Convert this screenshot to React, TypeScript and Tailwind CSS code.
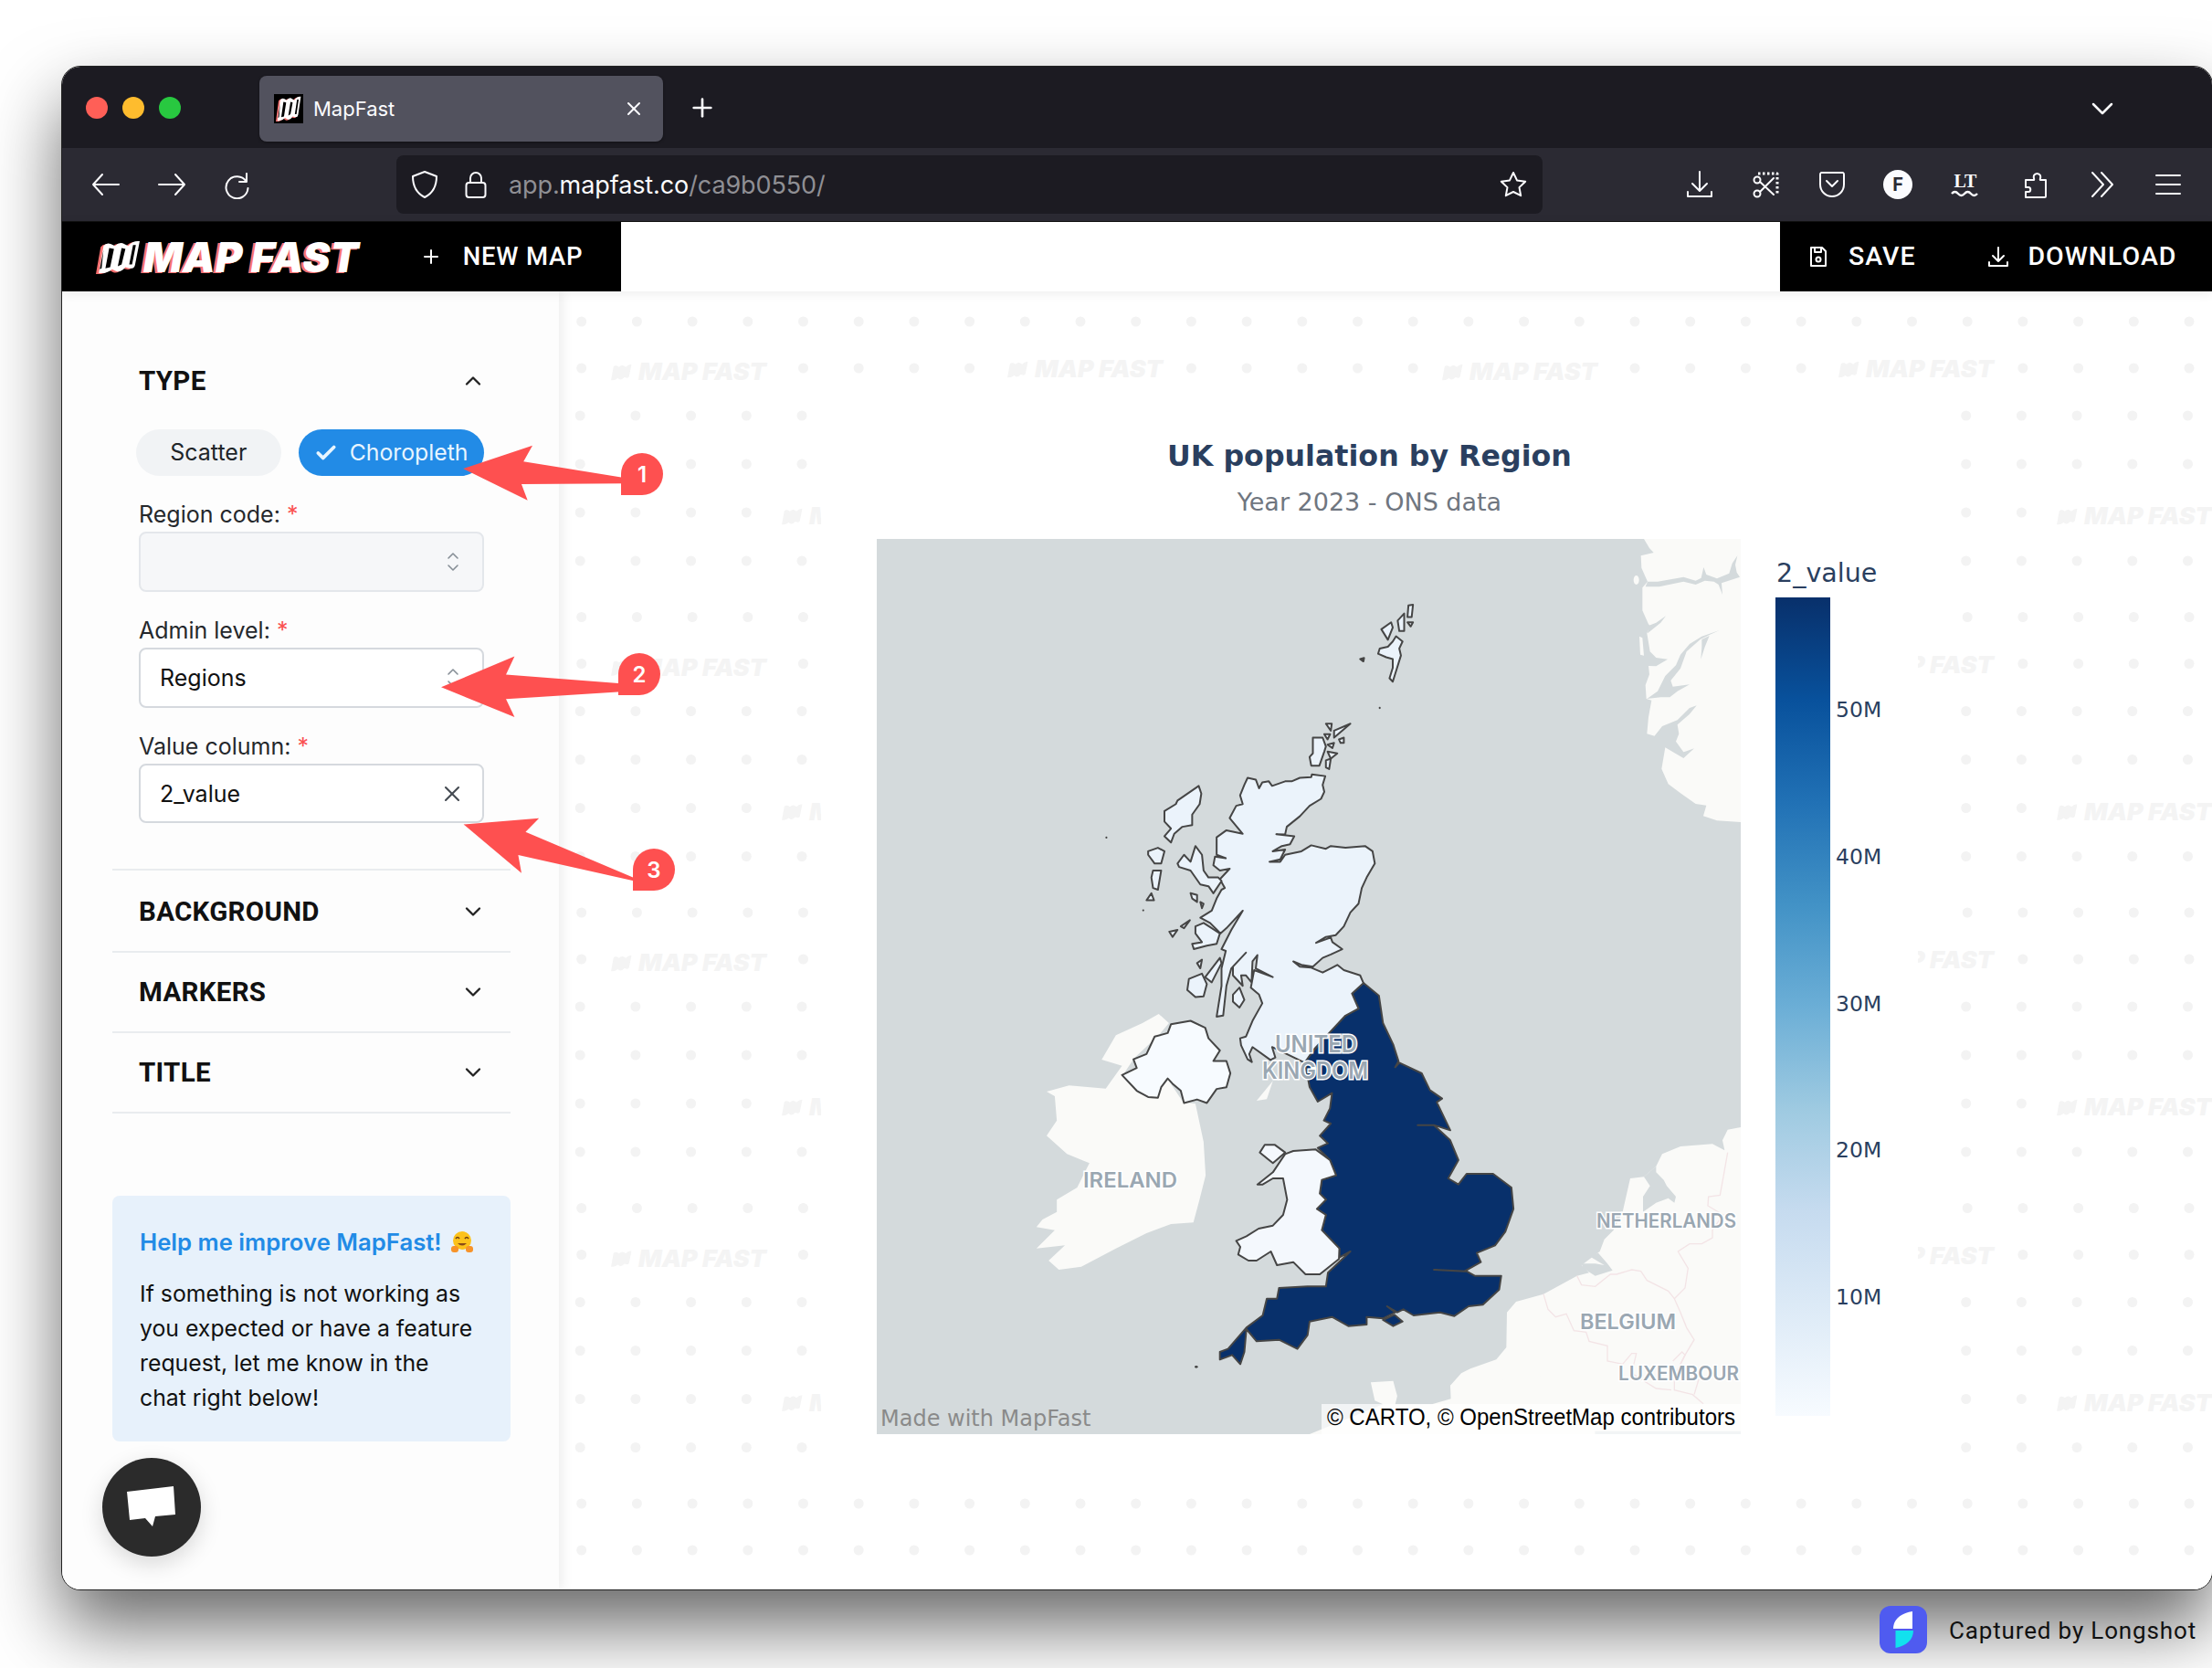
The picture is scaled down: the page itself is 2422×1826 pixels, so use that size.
import React from "react";
import { ChevronDown, ChevronUp, Check, X, Plus } from "lucide-react";

const LogoIcon = ({ fill = "#fff", shadow, className }: { fill?: string; shadow?: string; className?: string }) => {
  const outer = "M9 7 Q12 3 17 5 L21 7 Q26 2 31 5 L35 7 Q40 1 47 2 L42 27 Q41 31 36 30 L32 29 Q27 35 22 33 L18 31 Q12 36 4 35 Z";
  const slits = "M15 9 L20 10 L16 29 L11 30 Z M28 9 L32 10 L28 26 L24 28 Z M40 6 L43 6 L39 26 L36 26 Z M9 11 L7 30 L5 31 Z";
  return (
    <svg viewBox="1 1 47 35" className={className} preserveAspectRatio="none">
      {shadow && <path d={outer} fill={shadow} transform="translate(-3 1)" />}
      <path d={outer} fill={fill} />
      <path d={slits} fill={shadow ? "#000" : "#fff"} />
    </svg>
  );
};

const I = ({ className, children, vb = "0 0 32 32", sw = 2 }: { className?: string; children: React.ReactNode; vb?: string; sw?: number }) => (
  <svg viewBox={vb} className={className} fill="none" stroke="currentColor" strokeWidth={sw} strokeLinecap="round" strokeLinejoin="round">
    {children}
  </svg>
);

const BrowserIcons = {
  back: <I className="w-8 h-8"><path d="M30 16H2M12 5 2 16l10 11" /></I>,
  forward: <I className="w-8 h-8"><path d="M2 16h28M20 5l10 11-10 11" /></I>,
  reload: <I className="w-8 h-8"><path d="M26 4v9h-8M25.5 12.5A12 12 0 1 0 27.5 20" /></I>,
  shield: <I className="w-8 h-8"><path d="M16 2 29 7c0 10-3 18-13 23C6 25 3 17 3 7Z" /></I>,
  lock: <I className="w-8 h-8"><rect x="5.5" y="14" width="21" height="16" rx="3" /><path d="M10 14V9a6 6 0 0 1 12 0v5" /></I>,
  star: <I className="w-8 h-8"><path d="m16 3 4 8.4 9.2 1.3-6.7 6.4 1.7 9.1L16 24l-8.2 4.2 1.7-9.1-6.7-6.4 9.2-1.3Z" /></I>,
  download: <I className="w-8 h-8"><path d="M16 2v20M8 15l8 8 8-8M3 24v5h26v-5" /></I>,
  snip: (
    <I className="w-8 h-8">
      <path d="M7 4h21v22" strokeDasharray="2.5 2.5" strokeWidth="3" strokeLinecap="butt" />
      <circle cx="6" cy="11" r="3.5" />
      <circle cx="6" cy="26" r="3.5" />
      <path d="M9 13 24 27M9 24 24 9" />
    </I>
  ),
  pocket: <I className="w-8 h-8"><path d="M4 3h24a2 2 0 0 1 1 2v11a13 13 0 0 1-26 0V5a2 2 0 0 1 1-2Z" /><path d="m10 12 6 6 6-6" /></I>,
  puzzle: <I className="w-8 h-8"><path d="M5 30h21a1 1 0 0 0 1-1V11h-6c-1-1 1-2 0-5a4 4 0 0 0-7 0c-1 3 1 4 0 5H5v8h3c3 0 3 5 0 5H5Z" /></I>,
  chevrons: <I className="w-8 h-8"><path d="M4 3l12 13L4 29M14 3l12 13-12 13" /></I>,
  menu: <I className="w-8 h-8"><path d="M3 6h26M3 16h26M3 26h26" /></I>,
};

const DOT_ROWS = [0, 51, 103, 156, 209, 262];
const DOT_DX = [1.5, 1.5, 0, 0, 0, 0];
const WM: { x: number; y: number }[] = [];
[403, 726.5, 1050, 1373.5].forEach((y) =>
  [667, 1101, 1577, 2011].forEach((x) => WM.push({ x, y: y + (x === 1101 || x === 2011 ? 1 : 4) }))
);
[561, 884.5, 1208, 1531.5].forEach((y) => [854, 2250].forEach((x) => WM.push({ x, y: y + 4 })));
const DOTS: { x: number; y: number }[] = [];
for (let k = 0; k < 5; k++) {
  DOT_ROWS.forEach((r, idx) => {
    const y = 352 + 323.5 * k + r;
    if (y > 1700) return;
    for (let i = 0; i < 30; i++) {
      const x = 635.2 + DOT_DX[idx] + i * 60.7;
      const blocked = WM.some((w) => Math.abs(w.y - y) < 20 && x > w.x - 8 && x < w.x + 180);
      if (!blocked) DOTS.push({ x, y });
    }
  });
}

const Watermarks = () => (
  <svg viewBox="612 319 1810 1421" className="absolute inset-0 w-full h-full">
    {DOTS.map((d, i) => (
      <circle key={i} cx={d.x} cy={d.y} r="5.5" fill="#f3f3f3" />
    ))}
    {WM.map((w, i) => (
      <g key={i} fill="#f4f4f4">
        <path
          transform={`translate(${w.x} ${w.y - 9}) scale(0.52)`}
          d="M9 7 Q12 3 17 5 L21 7 Q26 2 31 5 L35 7 Q40 1 47 2 L42 27 Q41 31 36 30 L32 29 Q27 35 22 33 L18 31 Q12 36 4 35 Z"
        />
        <text x={w.x + 32} y={w.y + 9} textLength="140" lengthAdjust="spacingAndGlyphs" fontFamily="Inter" fontStyle="italic" fontWeight="900" fontSize="26">
          MAP FAST
        </text>
      </g>
    ))}
  </svg>
);

const LAND = "#fafaf8";
const WATER = "#d4dadc";
const OUT = { stroke: "#454545", strokeWidth: 2, vectorEffect: "non-scaling-stroke" as const, strokeLinejoin: "round" as const };
const SCOT = "#ebf3fb";
const Z4 = "translate(1100 620) scale(0.35714 0.3827)";
const Z5 = "translate(1050 1100) scale(0.44643 0.33333)";
const Z10 = "translate(1680 585) scale(0.33333)";
const Z11 = "translate(1600 1220) scale(0.33333)";

const MapLabel = ({ x, y, w, size, children }: { x: number; y: number; w: number; size: number; children: string }) => (
  <text
    x={x}
    y={y}
    textLength={w}
    lengthAdjust="spacingAndGlyphs"
    fontFamily="Inter"
    fontWeight="600"
    fontSize={size}
    fill="#9aa7b2"
    stroke="#fff"
    strokeWidth="3"
    style={{ paintOrder: "stroke" }}
  >
    {children}
  </text>
);

const UKMap = () => (
  <svg viewBox="960 590 946 980" className="w-[946px] h-[980px] block bg-[#d4dadc]">
    <g transform={Z10}>
      <polygon fill={LAND} points="360,15 378,45 392,60 350,70 352,110 372,155 355,175 355,250 375,295 380,300 370,325 380,385 400,405 438,410 400,433 375,432 378,460 365,495 368,540 385,545 375,600 370,655 395,662 415,640 430,700 418,770 440,820 480,850 530,885 565,890 555,925 600,940 678,945 678,15" />
      <polygon fill={WATER} points="372,155 405,155 490,140 530,152 548,143 556,108 565,132 600,145 640,128 650,95 667,70 660,100 665,125 675,140 615,160 618,198 605,165 590,155 560,152 530,165 490,155 410,172 365,172" />
      <polygon fill={WATER} points="375,300 400,290 432,268 415,290 372,325" />
      <polygon fill={WATER} points="608,315 550,335 510,360 480,395 465,430 430,465 405,515 370,540 415,535 445,535 470,515 510,493 455,500 448,480 480,440 500,385 545,345 575,330" />
      <polygon fill={WATER} points="550,345 575,333 560,370 547,410 550,370" />
      <polygon fill={WATER} points="533,562 510,570 470,610 420,630 395,662 420,700 430,700 490,735 525,703 500,712 490,715 465,680 475,655 470,625 510,590" />
      <ellipse cx="335" cy="150" rx="9" ry="15" fill={LAND} />
      <polygon fill={LAND} points="345,335 355,340 360,398 348,395" />
    </g>
    <g transform={Z11}>
      <polygon fill={LAND} points="918,42 875,50 858,85 865,118 825,97 720,105 660,130 640,170 600,205 575,208 555,210 530,320 500,380 470,410 455,450 395,495 420,520 380,530 270,590 180,615 150,650 148,765 115,805 30,835 0,850 -36,890 -30,1040 918,1040" />
      <polygon fill={WATER} points="640,170 600,205 620,235 597,270 597,320 640,290 680,275 700,290 705,270 675,235 665,215 640,190" />
      <polygon fill={WATER} points="420,465 450,455 480,490 497,512 440,530 400,505 395,490 440,490 470,495" />
      <g fill="none" stroke="#f3e4e6" strokeWidth="4">
        <polyline points="875,125 860,210 850,265 812,270 810,300 860,330 825,380 825,405 790,425 750,425 712,450 745,505 735,570 700,605 720,650 740,700 765,740 735,790 700,860 700,905 760,920 795,950" />
        <polyline points="380,530 395,560 440,565 490,525 510,525 560,510 590,515 610,545 680,580 700,605" />
        <polyline points="270,590 285,640 310,665 345,655 370,710 410,715 420,745 480,760 480,810 530,820 560,785 575,785 560,850 640,900 690,905" />
        <polyline points="700,860 735,790 725,780 695,810" />
        <polyline points="780,870 765,920" />
      </g>
    </g>
    <g transform={Z5}>
      <polygon fill={LAND} points="1205,1250 1210,1275 1230,1285 1160,1312 1070,1312 1075,1285 1065,1235 1010,1240 1020,1300 1040,1312 860,1410 1560,1410 1560,1200" />
      <polygon fill={LAND} points="490,30 515,60 490,100 430,175 400,235 440,290 480,305 510,240 550,320 580,325 600,450 605,560 590,640 575,715 520,720 460,750 385,800 300,860 245,870 220,840 260,790 190,800 235,740 190,730 205,705 240,680 240,640 290,600 320,520 265,490 215,430 240,380 235,300 215,285 270,265 360,275 400,200 350,180 385,100 450,60" />
      <polygon fill={LAND} points="730,315 770,250 755,310" />
      <polygon {...OUT} fill="#08306b" points="992,-72 1030,-30 1040,60 1065,130 1078,185 1070,205 1080,190 1135,225 1155,280 1185,308 1172,320 1205,412 1165,395 1125,395 1165,395 1205,445 1225,510 1200,570 1225,590 1245,555 1310,555 1355,600 1360,670 1340,745 1315,790 1270,815 1280,845 1240,875 1165,870 1245,875 1265,890 1330,890 1325,935 1285,985 1250,990 1215,1022 1180,1010 1115,1020 1090,1000 1075,1010 1050,990 1070,1010 1040,1030 1000,1025 1000,1050 955,1055 915,1025 860,1040 855,1085 830,1130 785,1100 730,1105 705,1065 700,1140 690,1180 670,1150 640,1165 640,1140 660,1130 705,1060 745,1020 755,965 780,965 785,930 855,925 900,925 905,880 960,810 933,830 933,800 890,740 900,690 878,670 900,640 885,620 890,575 925,560 910,510 880,470 905,455 885,430 912,390 895,380 910,340 915,290 880,318 860,270 848,185 908,92 948,35 980,12 964,-37" />
      <polygon {...OUT} fill="#08306b" points="1040,1035 1068,1018 1088,1040 1065,1055" />
      <polygon {...OUT} fill="#f4f8fd" points="875,475 820,480 800,490 770,550 732,590 745,590 770,570 795,570 805,640 795,690 770,725 735,735 705,760 680,775 690,795 685,820 710,840 730,840 765,810 780,855 820,845 850,885 885,885 932,835 933,800 890,740 900,690 878,670 900,640 885,620 890,575 925,560 910,510" />
      <polygon {...OUT} fill="#f4f8fd" points="738,485 750,460 775,460 800,485 770,520" />
      <circle cx="582" cy="1189" r="4" fill="#454545" />
    </g>
    <g transform={Z4}>
      <polygon {...OUT} fill="#f7fbff" points="510,1310 570,1300 615,1320 625,1350 660,1385 640,1415 680,1415 692,1450 680,1490 650,1495 620,1535 590,1525 550,1535 540,1500 515,1480 500,1465 480,1490 470,1520 440,1518 405,1500 360,1455 405,1435 395,1410 435,1395 460,1345 500,1335" />
      <polygon {...OUT} fill={SCOT} points="745,605 770,610 780,635 790,618 810,615 820,628 860,615 880,615 905,605 940,603 942,595 983,600 975,625 980,645 970,665 935,685 905,715 865,745 860,767 833,766 888,772 875,795 850,800 822,815 860,810 845,838 812,845 845,845 860,825 910,815 940,798 985,808 1000,800 1045,805 1105,800 1128,815 1135,850 1110,890 1095,920 1085,965 1060,990 1040,1030 1015,1055 985,1060 955,1077 1000,1062 1005,1075 1035,1095 1000,1110 975,1120 945,1145 910,1140 885,1130 905,1145 940,1148 975,1162 1000,1150 1020,1140 1040,1155 1090,1170 1100,1192 1065,1222 1085,1265 1045,1285 995,1335 950,1380 920,1420 820,1375 830,1405 815,1412 760,1375 750,1395 758,1418 745,1410 725,1370 722,1350 740,1345 760,1300 790,1250 780,1225 755,1205 765,1155 822,1175 770,1150 775,1112 760,1130 757,1190 740,1170 725,1170 730,1200 700,1170 700,1145 740,1105 695,1150 680,1200 670,1285 650,1288 665,1200 665,1150 678,1100 665,1095 695,1040 730,985 680,1035 662,1050 630,1020 600,1005 635,985 650,950 665,925 675,920 660,895 690,865 660,870 640,855 645,830 678,835 650,825 650,775 680,755 730,765 690,720 710,685 730,680 722,655 735,625" />
      {[
        "585,800 605,825 610,870 625,890 655,890 665,900 640,935 625,915 600,910 570,870 535,860 530,850 550,825 570,845",
        "595,628 603,650 598,680 575,710 575,740 545,745 520,765 510,790 490,772 510,750 490,730 490,700 525,680 530,670",
        "440,815 470,805 490,815 480,850 460,850 440,825",
        "455,870 480,870 470,925 455,920 450,890",
        "435,955 450,935 458,955",
        "585,1030 610,1020 660,1050 650,1080 620,1085 580,1095 575,1080 605,1075 585,1050",
        "505,1045 530,1040 515,1060",
        "540,1030 568,1012 550,1035",
        "615,1175 660,1120 665,1135 635,1190",
        "565,1180 605,1165 620,1195 610,1230 585,1232 560,1212",
        "700,1225 720,1205 735,1240 720,1262 700,1245",
        "590,1135 605,1125 600,1150",
        "570,935 590,940 590,960 575,950",
        "600,960 610,965 605,978",
        "945,490 975,490 985,515 980,530 965,570 940,570 935,545 945,535",
        "980,480 998,480 990,495",
        "985,450 1003,450 1000,470",
        "1010,470 1060,450 1010,490",
        "1025,495 1040,490 1040,505 1030,505",
        "990,510 1010,505 1005,520",
        "990,530 1020,535 1000,550",
        "985,555 1000,550 995,580 985,575",
        "1180,320 1190,330 1200,300 1215,255 1210,235 1220,215 1200,200 1190,215 1175,230 1150,235 1145,250 1170,260 1190,265 1190,290",
        "1205,155 1225,135 1225,185 1210,185",
        "1235,145 1238,112 1252,110 1248,145",
        "1155,180 1185,160 1190,175 1175,210",
        "1235,160 1252,160 1245,172",
        "1090,265 1102,262 1100,272",
      ].map((p, i) => (
        <polygon key={i} {...OUT} fill={SCOT} points={p} />
      ))}
      <circle cx="1150" cy="405" r="3" fill="#454545" />
      <circle cx="312" cy="776" r="3" fill="#454545" />
      <circle cx="425" cy="984" r="3" fill="#454545" />
    </g>
    <MapLabel x={1396} y={1152} w={90} size={25}>UNITED</MapLabel>
    <MapLabel x={1382} y={1181} w={116} size={25}>KINGDOM</MapLabel>
    <MapLabel x={1186} y={1300} w={103} size={23}>IRELAND</MapLabel>
    <MapLabel x={1748} y={1344} w={153} size={21}>NETHERLANDS</MapLabel>
    <MapLabel x={1730} y={1455} w={105} size={23}>BELGIUM</MapLabel>
    <MapLabel x={1772} y={1511} w={132} size={21}>LUXEMBOUR</MapLabel>
    <rect x="1447" y="1537" width="459" height="33" fill="#fff" fillOpacity="0.7" />
    <text x="1453" y="1560" fontFamily="Liberation Sans" fontSize="25" textLength="447" lengthAdjust="spacingAndGlyphs" fill="#000">© CARTO, © OpenStreetMap contributors</text>
    <text x="964" y="1561" fontFamily="DejaVu Sans" fontSize="24" fill="#8a8a8a">Made with MapFast</text>
  </svg>
);

const Section = ({ title, first }: { title: string; first?: boolean }) => (
  <div className={`${first ? "h-[90px] pt-[2px]" : "h-[88px]"} mx-[-29px] px-[29px] border-b-2 border-[#e9ecef] flex items-center justify-between`}>
    <span className="font-['Roboto',sans-serif] font-bold text-[29.5px] text-[#111] tracking-[0.3px]">{title}</span>
    <ChevronDown className="w-7 h-7 mr-[-2px] text-[#222]" strokeWidth={2} />
  </div>
);

const Label = ({ children }: { children: string }) => (
  <div className="text-[25px] leading-[32px] text-[#25282c]">
    {children} <span className="text-[#fa5252]">*</span>
  </div>
);

const Updown = () => (
  <svg viewBox="0 0 16 24" className="w-4 h-6 ml-[2px] text-[#868e96]" fill="none" stroke="currentColor" strokeWidth="1.6" strokeLinecap="round" strokeLinejoin="round">
    <path d="m3 8 5-5 5 5M3 16l5 5 5-5" />
  </svg>
);

const Sidebar = () => (
  <aside className="w-[544px] shrink-0 bg-[#fdfdfd] pl-[55px] pr-[53px] font-['Inter',sans-serif] relative z-10 shadow-[4px_0_12px_rgba(0,0,0,0.07)] flex flex-col">
    <div className="pt-[81px] pl-[29px] pr-[29px]">
      <div className="flex items-center justify-between h-[34px]">
        <span className="font-['Roboto',sans-serif] font-bold text-[29.5px] text-[#111] tracking-[0.3px]">TYPE</span>
        <ChevronUp className="w-7 h-7 mr-[-2px] text-[#222]" strokeWidth={2} />
      </div>
      <div className="flex items-center gap-[19px] mt-[36px] ml-[-3px]">
        <div className="w-[160px] h-[51px] rounded-full bg-[#f1f3f5] flex items-center justify-center text-[25px] text-[#212529]">Scatter</div>
        <div className="w-[205px] h-[51px] rounded-full bg-[#228be6] flex items-center pl-[17px] gap-[13px] text-[24.8px] text-[#e7f5ff]">
          <Check className="w-[26px] h-[26px]" strokeWidth={3.5} />
          Choropleth
        </div>
      </div>
      <div className="mt-[26px]">
        <Label>Region code:</Label>
        <div className="mt-[3px] h-[66px] rounded-[8px] border-2 border-[#e4e7eb] bg-[#f6f7f9] flex items-center justify-end pr-[24px]">
          <Updown />
        </div>
      </div>
      <div className="mt-[26px]">
        <Label>Admin level:</Label>
        <div className="mt-[3px] h-[66px] rounded-[8px] border-2 border-[#d5d9de] bg-white flex items-center justify-between pl-[21px] pr-[24px] text-[25px] text-[#111]">
          <span className="pt-[2px]">Regions</span>
          <Updown />
        </div>
      </div>
      <div className="mt-[26px]">
        <Label>Value column:</Label>
        <div className="mt-[3px] h-[65px] rounded-[8px] border-2 border-[#d5d9de] bg-white flex items-center justify-between pl-[21px] pr-[19px] text-[25px] text-[#111]">
          <span className="pt-[2px]">2_value</span>
          <X className="w-7 h-7 text-[#454b52]" strokeWidth={1.8} />
        </div>
      </div>
      <div className="h-[52px] mx-[-29px] border-b-2 border-[#e9ecef]" />
      <Section first title="BACKGROUND" />
      <Section title="MARKERS" />
      <Section title="TITLE" />
    </div>
    <div className="mt-[90px] h-[269px] rounded-[8px] bg-[#e7f1fb] pl-[30px] pr-[20px] pt-[33px]">
      <div className="flex items-center gap-[9px] text-[25.7px] leading-[36px] font-semibold text-[#228be6]">
        Help me improve MapFast!
        <svg viewBox="0 0 26 26" className="w-[26px] h-[26px]">
          <circle cx="13" cy="11" r="10" fill="#fcc21b" />
          <path d="M6 9q2-3 4 0M16 9q2-3 4 0" fill="none" stroke="#6b3e12" strokeWidth="1.5" />
          <path d="M8 14q5 5 10 0" fill="#8a4b17" />
          <rect x="1" y="17" width="8" height="7" rx="3" fill="#f79329" />
          <rect x="17" y="17" width="8" height="7" rx="3" fill="#f79329" />
        </svg>
      </div>
      <p className="mt-[19px] text-[24.8px] leading-[38px] text-[#111]">
        If something is not working as
        <br />
        you expected or have a feature
        <br />
        request, let me know in the
        <br />
        chat right below!
      </p>
    </div>
    <div className="mt-[18px] ml-[-11px] w-[108px] h-[108px] rounded-full bg-[#2b2b2b] shadow-[0_8px_24px_rgba(0,0,0,0.15)] flex items-center justify-center">
      <svg viewBox="0 0 54 46" className="w-[54px] h-[46px]">
        <path d="M0 6 51 0 53 31 31 33 28 44 20 35 3 37Z" fill="#fff" />
      </svg>
    </div>
  </aside>
);

const TICKS = ["50M", "40M", "30M", "20M", "10M"];

const Main = () => (
  <main className="flex-1 relative bg-white">
    <Watermarks />
    <div className="relative ml-[287px] mt-[111px] w-[1201px] h-[1170px] bg-white pt-[49px] font-['DejaVu_Sans',sans-serif]">
      <h1 className="text-center font-bold text-[31.7px] leading-[40px] text-[#2a3f5f]">UK population by Region</h1>
      <p className="mt-[13px] text-center text-[27px] leading-[36px] text-[#6f7680]">Year 2023 - ONS data</p>
      <div className="mt-[22px] ml-[61px] flex">
        <UKMap />
        <div className="ml-[38px] w-[140px]">
          <div className="h-[64px] pt-[20px] pl-[1px] text-[28.5px] leading-[36px] text-[#2a3f5f]">2_value</div>
          <div className="flex">
            <div className="w-[60px] h-[896px] bg-[linear-gradient(to_bottom,#08306b,#08519c_12.5%,#2171b5_25%,#4292c6_37.5%,#6baed6_50%,#9ecae1_62.5%,#c6dbef_75%,#deebf7_87.5%,#f7fbff)]" />
            <div className="pl-[6px] pt-[106px] text-[23.5px] text-[#2a3f5f]">
              {TICKS.map((t) => (
                <div key={t} className="h-[160.75px] leading-[34px]">{t}</div>
              ))}
            </div>
          </div>
        </div>
      </div>
    </div>
  </main>
);

const IconSlot = ({ x, children }: { x: number; children: React.ReactNode }) => (
  <div className="flex justify-center" style={{ width: x }}>{children}</div>
);

const Browser = () => (
  <>
    <div className="h-[89px] bg-[#1c1b22] flex items-center relative font-['Inter',sans-serif]">
      <div className="flex items-center gap-4 ml-[26px]">
        <span className="w-6 h-6 rounded-full bg-[#ff5f57]" />
        <span className="w-6 h-6 rounded-full bg-[#febc2e]" />
        <span className="w-6 h-6 rounded-full bg-[#28c840]" />
      </div>
      <div className="ml-[86px] w-[442px] h-[72px] mt-[2px] rounded-[8px] bg-[#52525e] shadow-[0_1px_3px_rgba(0,0,0,0.4)] flex items-center pl-4 pr-[20px]">
        <div className="w-8 h-8 bg-black flex items-center justify-center">
          <LogoIcon shadow="#f87171" className="w-7 h-7" />
        </div>
        <span className="ml-[11px] pt-[2px] text-[22px] text-[#fbfbfe] flex-1">MapFast</span>
        <X className="w-6 h-6 text-[#fbfbfe]" strokeWidth={2} />
      </div>
      <Plus className="ml-[27px] w-8 h-8 text-[#fbfbfe]" strokeWidth={2} />
      <ChevronDown className="absolute left-[2214px] top-[26px] w-10 h-10 text-[#fbfbfe]" strokeWidth={1.5} />
    </div>
    <div className="h-[81px] bg-[#2b2a33] border-b border-[#111] flex items-center text-[#fbfbfe] font-['Inter',sans-serif]">
      <div className="flex items-center gap-10 ml-[32px]">
        {BrowserIcons.back}
        {BrowserIcons.forward}
        {BrowserIcons.reload}
      </div>
      <div className="ml-[158px] w-[1255px] h-[64px] rounded-[8px] bg-[#1c1b22] flex items-center pl-[15px]">
        {BrowserIcons.shield}
        <span className="ml-[24px]">{BrowserIcons.lock}</span>
        <span className="ml-[20px] pt-[2px] text-[27px] text-[#8f8f94] flex-1 tracking-[-0.1px]">
          app.<span className="text-[#fbfbfe]">mapfast.co</span>/ca9b0550/
        </span>
        <span className="mr-[16px]">{BrowserIcons.star}</span>
      </div>
      <div className="flex items-center ml-[136px]">
        <IconSlot x={72}>{BrowserIcons.download}</IconSlot>
        <IconSlot x={73}>{BrowserIcons.snip}</IconSlot>
        <IconSlot x={72}>{BrowserIcons.pocket}</IconSlot>
        <IconSlot x={72}>
          <div className="w-8 h-8 rounded-full bg-[#fbfbfe] text-[#2b2a33] flex items-center justify-center text-[20px] font-bold">F</div>
        </IconSlot>
        <IconSlot x={76}>
          <div className="flex flex-col items-center leading-none">
            <span className="text-[20px] font-bold font-['Liberation_Serif',serif] leading-[20px]">LT</span>
            <svg viewBox="0 0 32 8" className="w-8 h-2" fill="none" stroke="currentColor" strokeWidth="2.4">
              <path d="M1 4q3.5-4 7 0t7 0 7 0 7 0" />
            </svg>
          </div>
        </IconSlot>
        <IconSlot x={77}>{BrowserIcons.puzzle}</IconSlot>
        <IconSlot x={71}>{BrowserIcons.chevrons}</IconSlot>
        <IconSlot x={72}>{BrowserIcons.menu}</IconSlot>
      </div>
    </div>
  </>
);

const HBtn = ({ icon, children }: { icon: React.ReactNode; children: string }) => (
  <div className="flex items-center gap-[21px]">
    {icon}
    <span className="text-[28.5px] font-medium tracking-[1px] font-['Roboto',sans-serif]">{children}</span>
  </div>
);

const AppHeader = () => (
  <div className="h-[76px] flex bg-white relative z-20 shadow-[0_2px_12px_rgba(0,0,0,0.08)] text-white">
    <div className="w-[612px] bg-black flex items-center">
      <div className="ml-[37px] flex items-center">
        <LogoIcon shadow="#f87171" className="w-[49px] h-[37px]" />
        <span className="ml-[3px] font-['Inter',sans-serif] italic font-black text-[45px] leading-none tracking-[0.1px] text-white [text-shadow:-3px_1px_0_#f87171]">
          MAP FAST
        </span>
      </div>
      <Plus className="ml-[67px] w-6 h-6" strokeWidth={2} />
      <span className="ml-[23px] text-[27.5px] font-medium tracking-[0.8px] font-['Roboto',sans-serif]">NEW MAP</span>
    </div>
    <div className="flex-1" />
    <div className="w-[473px] bg-black flex items-center pl-[30px] gap-[78px]">
      <HBtn
        icon={
          <svg viewBox="0 0 24 24" className="w-6 h-6" fill="none" stroke="currentColor" strokeWidth="2" strokeLinejoin="round">
            <path d="M4 2h12l4 4v16H4Z" />
            <path d="M8 2v5h7V2" />
            <circle cx="12" cy="15" r="2.5" />
          </svg>
        }
      >
        SAVE
      </HBtn>
      <HBtn
        icon={
          <svg viewBox="0 0 24 24" className="w-6 h-6" fill="none" stroke="currentColor" strokeWidth="2" strokeLinecap="round" strokeLinejoin="round">
            <path d="M12 2v15M6 11l6 6 6-6M2 18v4h20v-4" />
          </svg>
        }
      >
        DOWNLOAD
      </HBtn>
    </div>
  </div>
);

const Arrow = ({ pts, cx, cy, n }: { pts: string; cx: number; cy: number; n: string }) => (
  <g>
    <polygon points={pts} fill="#fe5050" transform="translate(100 370) scale(0.44643 0.39526)" />
    <path d={`M${cx - 23} ${cy + 23}V${cy}A23 23 0 1 1 ${cx} ${cy + 23}Z`} fill="#fe5050" />
    <text x={cx} y={cy + 9} textAnchor="middle" fontFamily="Inter" fontWeight="600" fontSize="24" fill="#fff">
      {n}
    </text>
  </g>
);

const Callouts = () => (
  <svg viewBox="0 0 2422 1826" className="absolute inset-0 w-full h-full pointer-events-none z-30">
    <Arrow n="1" cx={703} cy={519} pts="912,362 1082,298 1060,342 1310,388 1310,403 1055,405 1070,450" />
    <Arrow n="2" cx={700} cy={738} pts="858,967 1038,882 1017,932 1300,957 1300,980 1017,1000 1038,1050" />
    <Arrow n="3" cx={716} cy={952} pts="913,1347 1098,1330 1065,1368 1335,1497 1335,1505 1047,1432 1055,1482" />
  </svg>
);

export default function App() {
  return (
    <div className="relative w-[2422px] h-[1826px] overflow-hidden bg-white pt-[73px] pl-[68px]">
      <div className="w-[2354px] h-[1667px] rounded-[20px] overflow-hidden flex flex-col bg-white outline-1 outline-[#222] shadow-[0_40px_80px_rgba(0,0,0,0.6)]">
        <Browser />
        <AppHeader />
        <div className="flex-1 flex min-h-0">
          <Sidebar />
          <Main />
        </div>
      </div>
      <div className="flex items-center justify-end mt-[18px] pr-[17px]">
        <div className="w-[52px] h-[52px] rounded-[12px] bg-[#4f5bf0]">
          <svg viewBox="0 0 52 52" className="w-[52px] h-[52px]">
            <path d="M36 6V25H15C15 14 24 8 36 6Z" fill="#fff" />
            <path d="M17.5 46V27H37C37 37 29 44 17.5 46Z" fill="#12e1ee" />
          </svg>
        </div>
        <span className="ml-[24px] pt-[3px] text-[26px] tracking-[0.85px] text-[#111] font-['Roboto',sans-serif]">Captured by Longshot</span>
      </div>
      <Callouts />
    </div>
  );
}
